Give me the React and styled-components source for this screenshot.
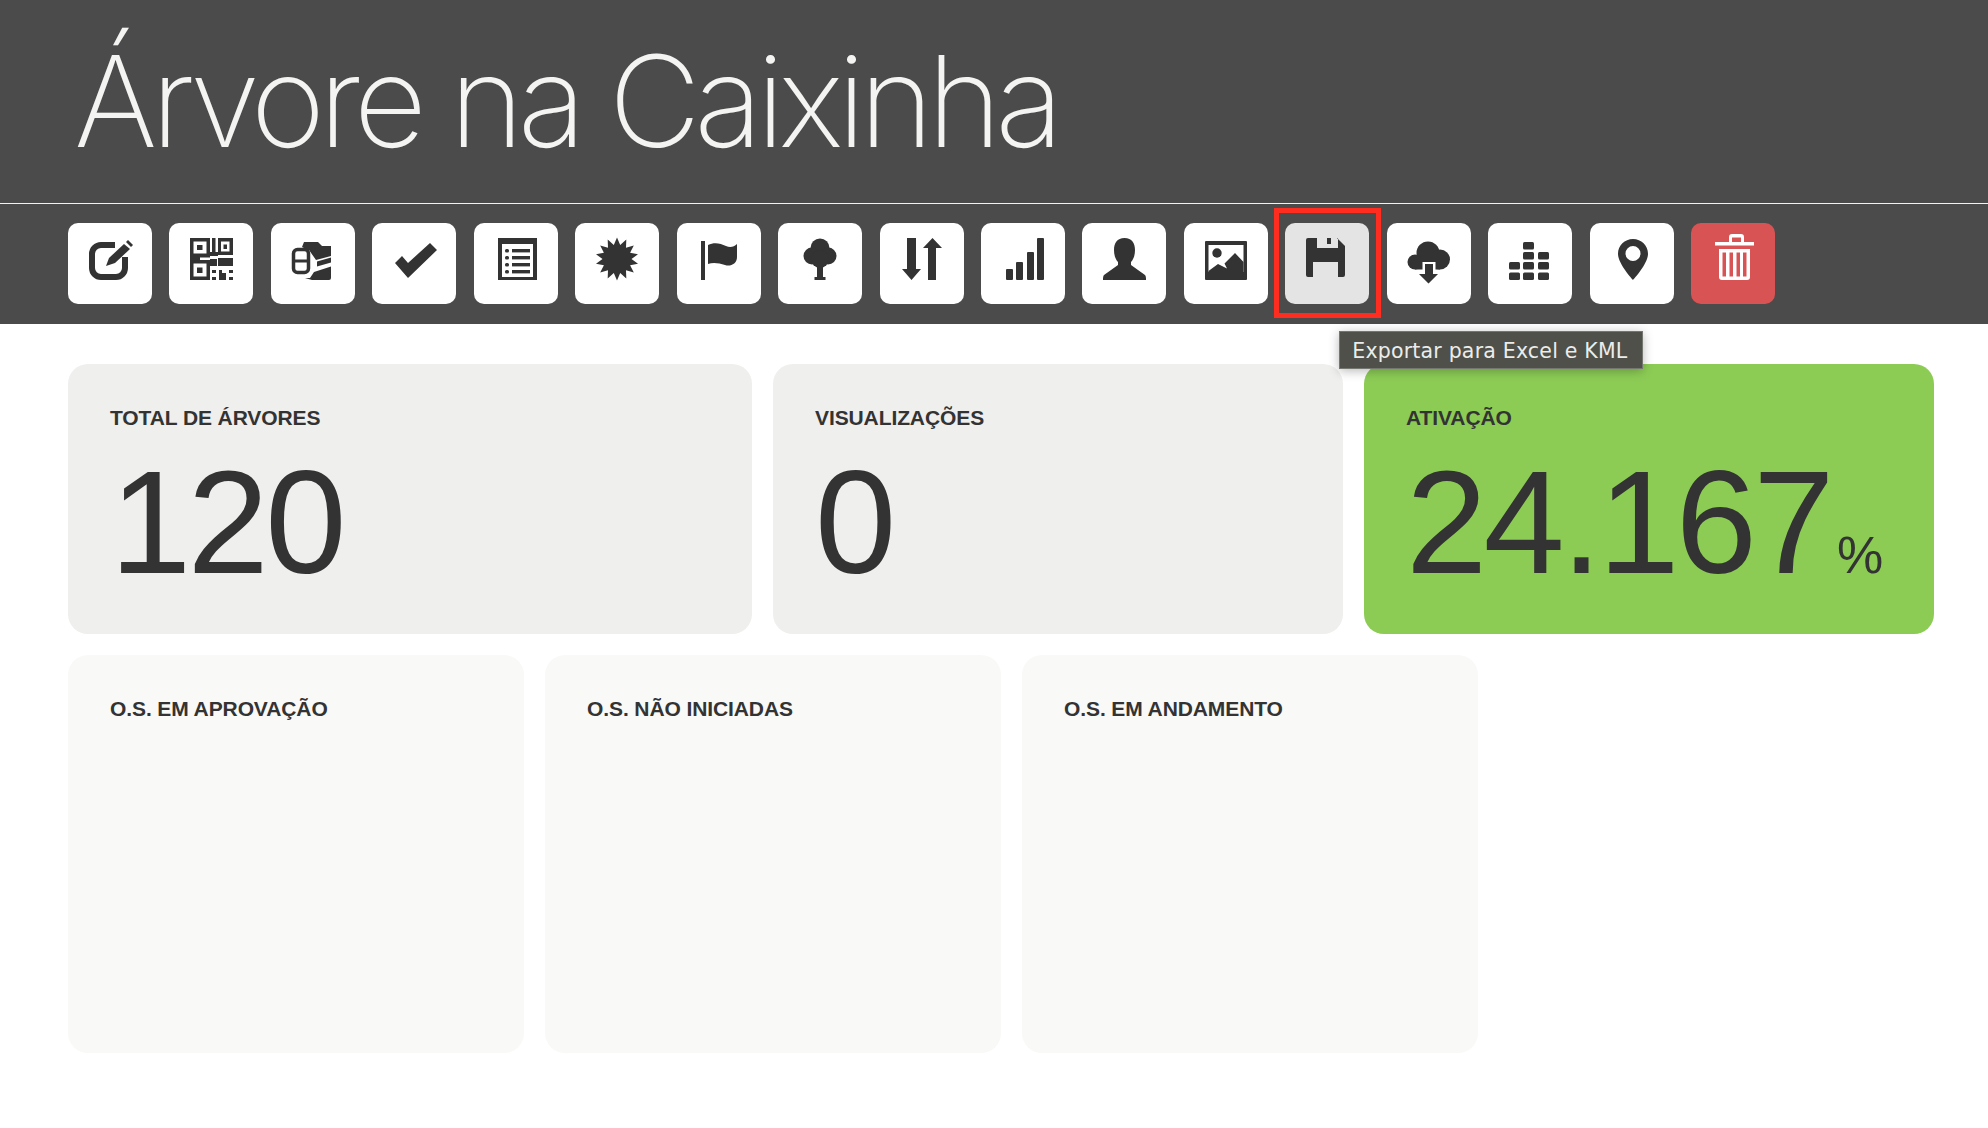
import React from "react";
import styled, { createGlobalStyle } from "styled-components";

const Global = createGlobalStyle`
  html, body { margin: 0; padding: 0; background: #fff; }
  body { font-family: "Liberation Sans", Arial, sans-serif; color: #333; }
`;

const Page = styled.div`
  width: 1988px;
  min-height: 1128px;
  background: #fff;
`;
const Masthead = styled.header`
  box-sizing: border-box;
  height: 204px;
  background: #4b4b4b;
  border-bottom: 1px solid #f2f2f2;
  padding: 24px 0 0 74px;
`;
const Title = styled.h1`
  margin: 0;
  font-family: Inter, "Liberation Sans", sans-serif;
  font-weight: 200;
  font-size: 127px;
  line-height: 154px;
  letter-spacing: -6.45px;
  color: #f4f4f2;
  white-space: nowrap;
`;
const Toolbar = styled.nav`
  display: flex;
  gap: 17.44px;
  height: 120px;
  box-sizing: border-box;
  padding: 19px 0 20px 68px;
  background: #4b4b4b;
`;
const ToolButton = styled.div`
  position: relative;
  flex: 0 0 84px;
  height: 81px;
  border-radius: 10px;
  background: ${(p) => (p.$tone === "danger" ? "#d85454" : p.$tone === "active" ? "#e4e4e4" : "#fff")};
  color: ${(p) => (p.$tone === "danger" ? "#fff" : "#333")};
`;
const Glyph = styled.svg`
  display: block;
  width: 84px;
  height: 81px;
`;
const Highlight = styled.div`
  position: absolute;
  left: -11px;
  top: -15px;
  width: 107px;
  height: 110px;
  box-sizing: border-box;
  border: 5px solid #ff2d20;
  pointer-events: none;
`;
const Tooltip = styled.div`
  position: absolute;
  left: 54px;
  top: 108px;
  z-index: 3;
  box-sizing: border-box;
  width: 304px;
  height: 38px;
  display: flex;
  align-items: center;
  padding: 1px 0 0 12px;
  background: #4e5049;
  border: 1.5px solid #747670;
  box-shadow: 0 2px 10px rgba(0, 0, 0, 0.28);
  color: #ececea;
  font-family: "DejaVu Sans", sans-serif;
  font-size: 20.5px;
  letter-spacing: 0.2px;
  white-space: nowrap;
`;
const Content = styled.main`
  padding: 40px 54px 0 68px;
  display: flex;
  flex-direction: column;
  gap: 21px;
`;
const StatRow = styled.section`
  display: grid;
  grid-template-columns: 684px 570px 570px;
  gap: 21px;
`;
const QueueRow = styled.section`
  display: grid;
  grid-template-columns: repeat(3, 456px);
  gap: 21px;
`;
const Card = styled.article`
  box-sizing: border-box;
  border-radius: 20px;
  padding: 42px 42px 0;
  background: ${(p) => p.$bg};
  height: ${(p) => p.$h}px;
`;
const Label = styled.h2`
  margin: 0;
  font-size: 21px;
  line-height: 24px;
  font-weight: 700;
  letter-spacing: -0.1px;
  color: #333;
  white-space: nowrap;
`;
const Value = styled.div`
  margin-top: 19px;
  font-size: 146px;
  line-height: 148px;
  letter-spacing: -3.6px;
  color: #333;
  white-space: nowrap;
`;
const Unit = styled.span`
  font-size: 52px;
  letter-spacing: 0;
  margin-left: 6px;
`;

const d = "currentColor";

const burst = (() => {
  const pts = [];
  const n = 14;
  for (let i = 0; i < n * 2; i++) {
    const r = i % 2 === 0 ? 21.5 : 14.5;
    const a = (i * Math.PI) / n - Math.PI / 2;
    pts.push(`${(42 + r * Math.cos(a)).toFixed(1)},${(36 + r * Math.sin(a)).toFixed(1)}`);
  }
  return pts.join(" ");
})();

const icons = {
  edit: (
    <>
      <path d="M47 22H33a9 9 0 0 0-9 9v14a9 9 0 0 0 9 9h15a9 9 0 0 0 9-9V34" fill="none" stroke={d} strokeWidth="6" />
      <path d="M38 43l3-8 15-14 6 5-15 14z" fill={d} />
      <path d="M58 19l2-2 5 5-2 2z" fill={d} />
    </>
  ),
  qr: (
    <path
      fill={d}
      fillRule="evenodd"
      d="M21 15h20v19.500H21zM24.500 18.500v12h13v-12zM28 22h5.500v5H28zM49 15h15v17H49zM52 18.500v10h8.500v-10zM54.500 21.500H58v4.500h-3.500zM43 15h3.500v14H49v4h-8v-4h2zM21 34.500h10V37H21zM21 37h20v20H21zM24.500 40.500v13h13v-13zM28 44.500h5.500V50H28zM41 36h7v7h-7zM49 35h15v8H49zM43 47h4v3h-4zM50 47h3v3h-3zM60 47h4v3h-4zM50 50h7v7h-7zM43 54h4v3h-4zM60 54h4v3h-4z"
    />
  ),
  ticket: (
    <>
      <path d="M33 19h14l4 4h9v10l-15 4-7-10H34a4 4 0 0 0-3-3z" fill={d} />
      <path d="M60 34.500v5l-14 4v-5z" fill={d} />
      <path d="M60 43.500V55a2 2 0 0 1-2 2H41l-7-2h5l4-6z" fill={d} />
      <rect x="22.500" y="26.500" width="15" height="23" rx="4" fill="#fff" stroke={d} strokeWidth="3.5" />
      <path d="M22 38h16" stroke={d} strokeWidth="3" />
    </>
  ),
  check: <polygon fill={d} points="23,40 30,33 36,40 58,20 65,27 36,55" />,
  list: (
    <>
      <path fill={d} fillRule="evenodd" d="M24 15h39v42H24zM28 21v33h31V21z" />
      {[26, 33, 40, 47].map((y) => (
        <g key={y} fill={d}>
          <rect x="31" y={y} width="4" height="3.4" rx="1.5" />
          <rect x="38" y={y} width="18" height="3.4" />
        </g>
      ))}
    </>
  ),
  burst: <polygon fill={d} points={burst} />,
  flag: (
    <>
      <rect x="24" y="18" width="4" height="39" fill={d} />
      <path fill={d} d="M31 22c6-3 12-2 18 1 4 2 8 1 11-2v13c0 7-7 10-12 8-6-2-12-3-17-1z" />
    </>
  ),
  tree: (
    <g fill={d}>
      <circle cx="42" cy="25" r="9.5" />
      <circle cx="34" cy="33" r="8.5" />
      <circle cx="50" cy="33" r="8.5" />
      <circle cx="42" cy="36" r="9" />
      <path d="M39 40h6v14h2.5v3h-11v-3H39z" />
    </g>
  ),
  sort: <path fill={d} d="M27 15h9v31h5L31.500 57 22 46h5zM52.500 15L62 25h-6v32h-8V25h-5z" />,
  bars: (
    <g fill={d}>
      <rect x="25" y="46" width="7" height="11" rx="1" />
      <rect x="35" y="39" width="7" height="18" rx="1" />
      <rect x="46" y="29" width="7" height="28" rx="1" />
      <rect x="56" y="15" width="7" height="42" rx="1" />
    </g>
  ),
  user: (
    <path
      fill={d}
      d="M42.500 15c-7.500 0-10.500 5-10.500 12 0 6 2 10 4 12v3L22 52c-1 1-1 3-1 5h43c0-2 0-4-1-5L49 42v-3c2-2 4-6 4-12 0-7-3-12-10.500-12z"
    />
  ),
  image: (
    <>
      <rect x="21" y="18" width="42" height="39" rx="1" fill={d} />
      <rect x="24.500" y="22" width="35" height="27" fill="#fff" />
      <circle cx="33" cy="30" r="4.700" fill={d} />
      <path fill={d} d="M24.500 48L34 41l9 4.500-2.500-5L51 30l8.500 9v10h-35z" />
    </>
  ),
  save: (
    <path
      fill={d}
      fillRule="evenodd"
      d="M23 15h29l8 8v29a2 2 0 0 1-2 2h-5V39H28v15h-5a2 2 0 0 1-2-2V17a2 2 0 0 1 2-2zM32 15v10h21V15h-7v6h-4v-6z"
    />
  ),
  cloud: (
    <>
      <g fill={d}>
        <circle cx="41" cy="30" r="11.500" />
        <circle cx="53" cy="36.500" r="10" />
        <circle cx="28" cy="39" r="7.500" />
        <rect x="28" y="36" width="25" height="10.500" />
      </g>
      <rect x="35.500" y="39" width="13" height="14" fill="#fff" />
      <path fill={d} d="M38 41h8v10h5l-9.500 9.500L32 51h6z" />
    </>
  ),
  equalizer: (
    <g fill={d}>
      {[
        [35, 19], [35, 29], [50, 29], [21, 39], [35, 39], [50, 39], [21, 49.500], [35, 49.500], [50, 49.500],
      ].map(([x, y]) => (
        <rect key={`${x}-${y}`} x={x} y={y} width="11" height="7.500" rx="1.500" />
      ))}
    </g>
  ),
  pin: (
    <path
      fill={d}
      fillRule="evenodd"
      d="M43 16c-8.300 0-15 6.500-15 14.800C28 41 43 57 43 57s15-16 15-26.200C58 22.500 51.300 16 43 16zM43 23a7.500 7.500 0 1 1 0 15 7.500 7.500 0 0 1 0-15z"
    />
  ),
  trash: (
    <>
      <g fill={d}>
        <path fillRule="evenodd" d="M41 11h9a3 3 0 0 1 3 3v5h-3v-4.500h-9V19h-3v-5a3 3 0 0 1 3-3z" />
        <rect x="24" y="19" width="39" height="3.500" />
        <path d="M28 26h31v28a3 3 0 0 1-3 3H31a3 3 0 0 1-3-3z" />
      </g>
      <g fill="#d85454">
        <rect x="31.500" y="29.500" width="3.500" height="24" />
        <rect x="38.500" y="29.500" width="3.500" height="24" />
        <rect x="45.500" y="29.500" width="3.500" height="24" />
        <rect x="52" y="29.500" width="3.500" height="24" />
      </g>
    </>
  ),
};

const tools = [
  "edit", "qr", "ticket", "check", "list", "burst", "flag", "tree", "sort",
  "bars", "user", "image", "save", "cloud", "equalizer", "pin", "trash",
];

const stats = [
  { label: "TOTAL DE ÁRVORES", value: "120", bg: "#efefee" },
  { label: "VISUALIZAÇÕES", value: "0", bg: "#efefee" },
  { label: "ATIVAÇÃO", value: "24.167", unit: "%", bg: "#8ccc55" },
];
const queues = ["O.S. EM APROVAÇÃO", "O.S. NÃO INICIADAS", "O.S. EM ANDAMENTO"];

export default function App() {
  return (
    <Page>
      <Global />
      <Masthead>
        <Title>Árvore na Caixinha</Title>
      </Masthead>
      <Toolbar>
        {tools.map((t) => (
          <ToolButton key={t} $tone={t === "trash" ? "danger" : t === "save" ? "active" : undefined}>
            <Glyph viewBox="0 0 84 81">{icons[t]}</Glyph>
            {t === "save" && (
              <>
                <Highlight />
                <Tooltip>Exportar para Excel e KML</Tooltip>
              </>
            )}
          </ToolButton>
        ))}
      </Toolbar>
      <Content>
        <StatRow>
          {stats.map((s) => (
            <Card key={s.label} $bg={s.bg} $h={270}>
              <Label>{s.label}</Label>
              <Value>
                {s.value}
                {s.unit && <Unit>{s.unit}</Unit>}
              </Value>
            </Card>
          ))}
        </StatRow>
        <QueueRow>
          {queues.map((q) => (
            <Card key={q} $bg="#f9f9f7" $h={398}>
              <Label>{q}</Label>
            </Card>
          ))}
        </QueueRow>
      </Content>
    </Page>
  );
}
